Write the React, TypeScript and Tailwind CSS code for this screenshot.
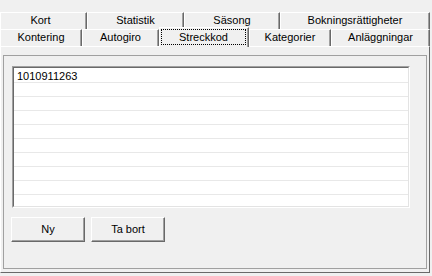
import React from "react";

type TabProps = { label: string; w: string; extra?: string };

function Tab({ label, w, extra = "" }: TabProps) {
  return (
    <div
      className={`${w} h-[17px] shrink-0 flex justify-center border-t border-l border-r border-t-white border-l-white border-r-[#696969] shadow-[inset_-1px_0_0_#a0a0a0] leading-[15px] whitespace-nowrap ${extra}`}
    >
      {label}
    </div>
  );
}

function Button({ label }: { label: string }) {
  return (
    <div className="w-[74px] h-[25px] flex items-center justify-center border border-t-white border-l-white border-r-[#696969] border-b-[#696969] shadow-[inset_-1px_-1px_0_#a0a0a0] bg-[#f0f0f0]">
      {label}
    </div>
  );
}

export default function App() {
  const rows = ["1010911263", "", "", "", "", "", "", "", "", "", ""];
  return (
    <div className="w-[432px] h-[276px] overflow-hidden bg-[#f0f0f0] pt-[12px] text-[11px] text-black font-['Liberation_Sans',Arial,sans-serif]">
      {/* Back row of tabs */}
      <div className="flex w-[430px]">
        <Tab label="Kort" w="w-[87px]" extra="pr-[6px]" />
        <Tab label="Statistik" w="w-[97px]" />
        <Tab label="Säsong" w="w-[96px]" />
        <Tab label="Bokningsrättigheter" w="w-[150px]" />
      </div>
      {/* Front row of tabs */}
      <div className="flex w-[430px] items-start">
        <Tab label="Kontering" w="w-[82px]" />
        <Tab label="Autogiro" w="w-[77px]" />
        <div className="relative z-10 w-[90px] h-[20px] mt-[-2px] mb-[-1px] shrink-0 border-t border-l border-r border-t-white border-l-white border-r-[#696969] shadow-[inset_-1px_0_0_#a0a0a0] bg-[#f0f0f0] pl-[1px] pt-[1px]">
          <div className="w-[85px] h-[16px] border border-dotted border-black flex justify-center leading-[14px] mt-0">
            Streckkod
          </div>
        </div>
        <Tab label="Kategorier" w="w-[82px]" />
        <Tab label="Anläggningar" w="w-[99px]" />
      </div>
      {/* Panel */}
      <div className="w-[430px] h-[227px] border border-t-white border-l-white border-r-[#696969] border-b-[#696969] pl-[2px] pr-[2px] pt-[8px] pb-[3px]">
        <div className="w-[424px] h-[214px] border border-[#a0a0a0] pt-[10px]">
          {/* Listbox */}
          <div className="ml-[8px] w-[398px] h-[142px] border border-t-[#a0a0a0] border-l-[#a0a0a0] border-r-white border-b-white">
            <div className="w-full h-full border border-t-[#696969] border-l-[#696969] border-r-[#e3e3e3] border-b-[#e3e3e3] bg-white overflow-hidden pt-[1px]">
              {rows.map((r, i) => (
                <div
                  key={i}
                  className="h-[14px] border-b border-[#e8e8e8] pl-[3px] leading-[14px]"
                >
                  {r}
                </div>
              ))}
            </div>
          </div>
          {/* Buttons */}
          <div className="flex gap-[6px] ml-[7px] mt-[9px]">
            <Button label="Ny" />
            <Button label="Ta bort" />
          </div>
        </div>
      </div>
    </div>
  );
}
